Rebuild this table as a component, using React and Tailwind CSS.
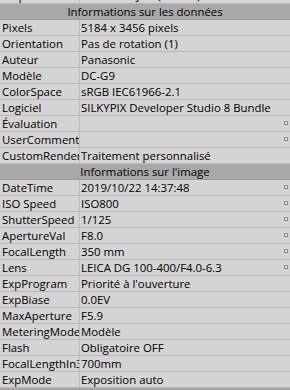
import React from "react";

const dataRows = [
  ["Pixels", "5184 x 3456 pixels"],
  ["Orientation", "Pas de rotation (1)"],
  ["Auteur", "Panasonic"],
  ["Modèle", "DC-G9"],
  ["ColorSpace", "sRGB IEC61966-2.1"],
  ["Logiciel", "SILKYPIX Developer Studio 8 Bundle"],
  ["Évaluation", "", true],
  ["UserComment", "", true],
  ["CustomRendered", "Traitement personnalisé"],
];

const imageRows = [
  ["DateTime", "2019/10/22 14:37:48", true],
  ["ISO Speed", "ISO800", true],
  ["ShutterSpeed", "1/125", true],
  ["ApertureVal", "F8.0", true],
  ["FocalLength", "350 mm", true],
  ["Lens", "LEICA DG 100-400/F4.0-6.3", true],
  ["ExpProgram", "Priorité à l'ouverture"],
  ["ExpBiase", "0.0EV"],
  ["MaxAperture", "F5.9"],
  ["MeteringMode", "Modèle"],
  ["Flash", "Obligatoire OFF"],
  ["FocalLengthIn35mm", "700mm"],
  ["ExpMode", "Exposition auto"],
];

function Row({ label, value, edit }) {
  return (
    <div className="flex h-4 border-b border-[#b8b8b8] bg-[#d4d4d4]">
      <div className="w-[80px] shrink-0 overflow-hidden whitespace-nowrap border-r border-[#bcbcbc] pl-[2px] leading-[15px]">
        {label}
      </div>
      <div className="relative flex-1 overflow-hidden whitespace-nowrap pl-[1px] leading-[15px]">
        {value}
        {edit && (
          <span className="absolute right-[2px] top-[5px] h-[4px] w-[4px] border border-[#8a8a8a] bg-[#ececec]" />
        )}
      </div>
    </div>
  );
}

function Section({ title }) {
  return (
    <div className="h-4 border-b border-[#9c9c9c] bg-[#a8a8a8] text-center leading-[15px]">
      {title}
    </div>
  );
}

export default function App() {
  return (
    <div
      className="h-[390px] w-[290px] overflow-hidden bg-[#d4d4d4] text-[11.4px] text-black"
      style={{ fontFamily: '"Open Sans", "Noto Sans", sans-serif' }}
    >
      <div className="-mt-3">
        <Row label="Emplacement" value="P1000482.JPG (7.4 Mo)" />
        <Section title="Informations sur les données" />
        {dataRows.map(([l, v, e]) => (
          <Row key={l} label={l} value={v} edit={e} />
        ))}
        <Section title="Informations sur l'image" />
        {imageRows.map(([l, v, e]) => (
          <Row key={l} label={l} value={v} edit={e} />
        ))}
        <div className="h-[4px] bg-[#a4a4a4]" />
      </div>
    </div>
  );
}
